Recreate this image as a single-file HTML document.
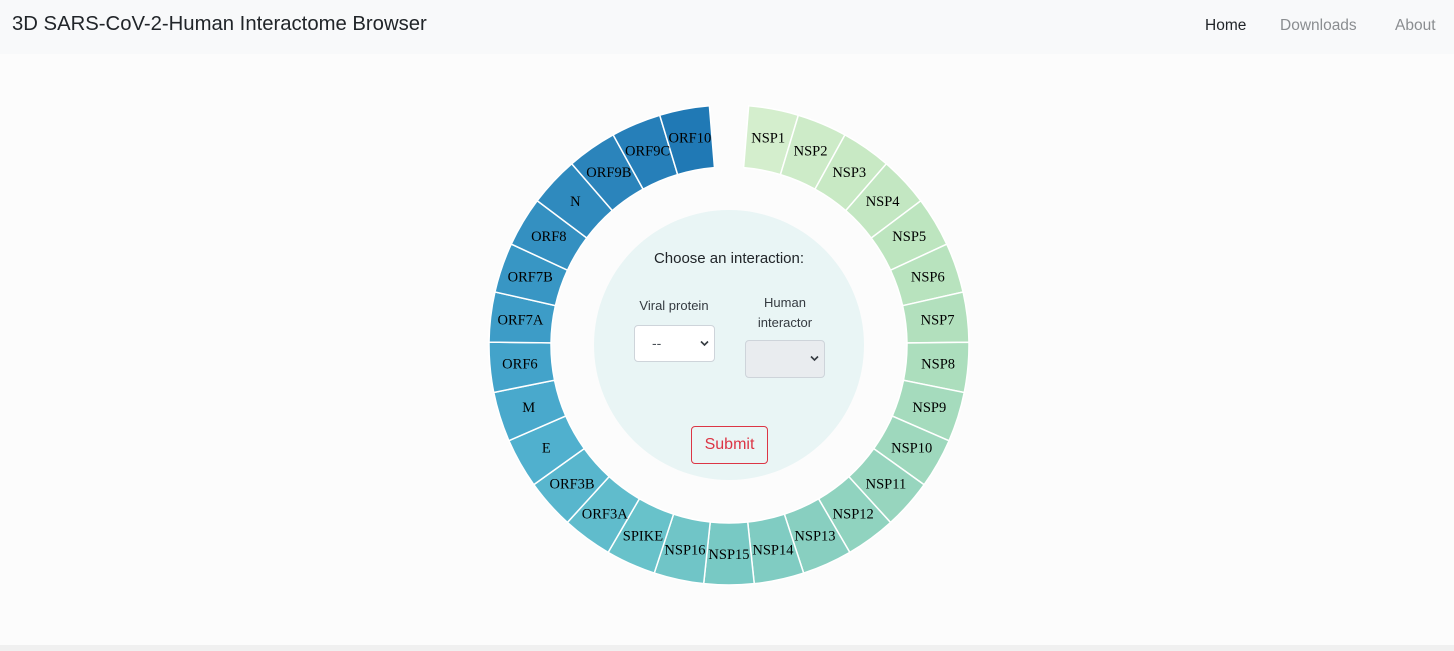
<!DOCTYPE html>
<html><head><meta charset="utf-8"><style>
html,body{margin:0;padding:0;width:1454px;height:651px;overflow:hidden;background:#fcfcfc;font-family:"Liberation Sans",sans-serif;}
.nav{position:absolute;left:0;top:0;width:1454px;height:54px;background:#f8f9fa;}
.title{position:absolute;left:12px;top:13px;font-size:20.3px;color:#212529;}
.nav a{position:absolute;top:17px;font-size:15.5px;color:#8a8d90;text-decoration:none;}
.foot{position:absolute;left:0;top:645px;width:1454px;height:6px;background:#f0f0f0;}
.lbl{position:absolute;font-size:13px;color:#343a40;text-align:center;}
.sel{position:absolute;border:1px solid #ced4da;border-radius:4px;box-sizing:border-box;}
.sel svg{position:absolute;right:5px;top:50%;margin-top:-4px;}
</style></head><body>
<div class="nav"><div class="title">3D SARS-CoV-2-Human Interactome Browser</div>
<a style="left:1205px;color:#212529">Home</a><a style="left:1280px">Downloads</a><a style="left:1395px">About</a></div>
<svg width="1454" height="651" style="position:absolute;left:0;top:0">
<defs><path id="seg" d="M-25.27,-238.66 A240,240 0 0 1 25.27,-238.66 L18.74,-177.01 A178,178 0 0 0 -18.74,-177.01Z" stroke="#fff" stroke-width="1.5"/></defs>
<circle cx="729" cy="345" r="135" fill="#e9f5f5"/>
<g transform="translate(729,345)">
<use href="#seg" transform="rotate(10.75)" fill="#d4eecd"/>
<use href="#seg" transform="rotate(22.84)" fill="#cdebc8"/>
<use href="#seg" transform="rotate(34.93)" fill="#c8e9c4"/>
<use href="#seg" transform="rotate(47.02)" fill="#c3e7c2"/>
<use href="#seg" transform="rotate(59.11)" fill="#bde5bf"/>
<use href="#seg" transform="rotate(71.2)" fill="#b8e3be"/>
<use href="#seg" transform="rotate(83.29)" fill="#b2e0bd"/>
<use href="#seg" transform="rotate(95.38)" fill="#acdebd"/>
<use href="#seg" transform="rotate(107.47)" fill="#a5dbbd"/>
<use href="#seg" transform="rotate(119.56)" fill="#9ed8bd"/>
<use href="#seg" transform="rotate(131.65)" fill="#97d5be"/>
<use href="#seg" transform="rotate(143.74)" fill="#90d3bf"/>
<use href="#seg" transform="rotate(155.83)" fill="#88cfc0"/>
<use href="#seg" transform="rotate(167.92)" fill="#80ccc2"/>
<use href="#seg" transform="rotate(180.01)" fill="#78c9c4"/>
<use href="#seg" transform="rotate(192.1)" fill="#70c5c7"/>
<use href="#seg" transform="rotate(204.19)" fill="#68c2ca"/>
<use href="#seg" transform="rotate(216.28)" fill="#60bccc"/>
<use href="#seg" transform="rotate(228.37)" fill="#58b6cd"/>
<use href="#seg" transform="rotate(240.46)" fill="#50b0ce"/>
<use href="#seg" transform="rotate(252.55)" fill="#49a9cc"/>
<use href="#seg" transform="rotate(264.64)" fill="#43a3ca"/>
<use href="#seg" transform="rotate(276.73)" fill="#3d9cc7"/>
<use href="#seg" transform="rotate(288.82)" fill="#3896c4"/>
<use href="#seg" transform="rotate(300.91)" fill="#3490c1"/>
<use href="#seg" transform="rotate(313)" fill="#2f8abe"/>
<use href="#seg" transform="rotate(325.09)" fill="#2b84bb"/>
<use href="#seg" transform="rotate(337.18)" fill="#267fb9"/>
<use href="#seg" transform="rotate(349.27)" fill="#2079b5"/>
<g font-family="Liberation Serif,serif" font-size="14.5" text-anchor="middle" dominant-baseline="central" fill="#000">
<text transform="rotate(10.75) translate(0,-210) rotate(-10.75)">NSP1</text>
<text transform="rotate(22.84) translate(0,-210) rotate(-22.84)">NSP2</text>
<text transform="rotate(34.93) translate(0,-210) rotate(-34.93)">NSP3</text>
<text transform="rotate(47.02) translate(0,-210) rotate(-47.02)">NSP4</text>
<text transform="rotate(59.11) translate(0,-210) rotate(-59.11)">NSP5</text>
<text transform="rotate(71.2) translate(0,-210) rotate(-71.2)">NSP6</text>
<text transform="rotate(83.29) translate(0,-210) rotate(-83.29)">NSP7</text>
<text transform="rotate(95.38) translate(0,-210) rotate(-95.38)">NSP8</text>
<text transform="rotate(107.47) translate(0,-210) rotate(-107.47)">NSP9</text>
<text transform="rotate(119.56) translate(0,-210) rotate(-119.56)">NSP10</text>
<text transform="rotate(131.65) translate(0,-210) rotate(-131.65)">NSP11</text>
<text transform="rotate(143.74) translate(0,-210) rotate(-143.74)">NSP12</text>
<text transform="rotate(155.83) translate(0,-210) rotate(-155.83)">NSP13</text>
<text transform="rotate(167.92) translate(0,-210) rotate(-167.92)">NSP14</text>
<text transform="rotate(180.01) translate(0,-210) rotate(-180.01)">NSP15</text>
<text transform="rotate(192.1) translate(0,-210) rotate(-192.1)">NSP16</text>
<text transform="rotate(204.19) translate(0,-210) rotate(-204.19)">SPIKE</text>
<text transform="rotate(216.28) translate(0,-210) rotate(-216.28)">ORF3A</text>
<text transform="rotate(228.37) translate(0,-210) rotate(-228.37)">ORF3B</text>
<text transform="rotate(240.46) translate(0,-210) rotate(-240.46)">E</text>
<text transform="rotate(252.55) translate(0,-210) rotate(-252.55)">M</text>
<text transform="rotate(264.64) translate(0,-210) rotate(-264.64)">ORF6</text>
<text transform="rotate(276.73) translate(0,-210) rotate(-276.73)">ORF7A</text>
<text transform="rotate(288.82) translate(0,-210) rotate(-288.82)">ORF7B</text>
<text transform="rotate(300.91) translate(0,-210) rotate(-300.91)">ORF8</text>
<text transform="rotate(313) translate(0,-210) rotate(-313)">N</text>
<text transform="rotate(325.09) translate(0,-210) rotate(-325.09)">ORF9B</text>
<text transform="rotate(337.18) translate(0,-210) rotate(-337.18)">ORF9C</text>
<text transform="rotate(349.27) translate(0,-210) rotate(-349.27)">ORF10</text>
</g></g></svg>
<div class="lbl" style="left:600px;top:250px;width:258px;font-size:15px;color:#212529">Choose an interaction:</div>
<div class="lbl" style="left:624px;top:298px;width:100px">Viral protein</div>
<div class="lbl" style="left:735px;top:293px;width:100px;line-height:20px">Human<br>interactor</div>
<div class="sel" style="left:634px;top:325px;width:81px;height:37px;background:#fff">
<span style="position:absolute;left:17px;top:9px;font-size:14px;color:#495057">--</span>
<svg width="9" height="7" viewBox="0 0 9 7"><path d="M1 1.5l3.5 3.5 3.5-3.5" stroke="#343a40" stroke-width="1.6" fill="none"/></svg></div>
<div class="sel" style="left:745px;top:340px;width:80px;height:38px;background:#e9ecef">
<svg width="9" height="7" viewBox="0 0 9 7"><path d="M1 1.5l3.5 3.5 3.5-3.5" stroke="#343a40" stroke-width="1.6" fill="none"/></svg></div>
<div style="position:absolute;left:691px;top:426px;width:77px;height:38px;box-sizing:border-box;border:1px solid #dc3545;border-radius:4px;color:#dc3545;font-size:16px;text-align:center;line-height:36px">Submit</div>
<div class="foot"></div>
</body></html>
